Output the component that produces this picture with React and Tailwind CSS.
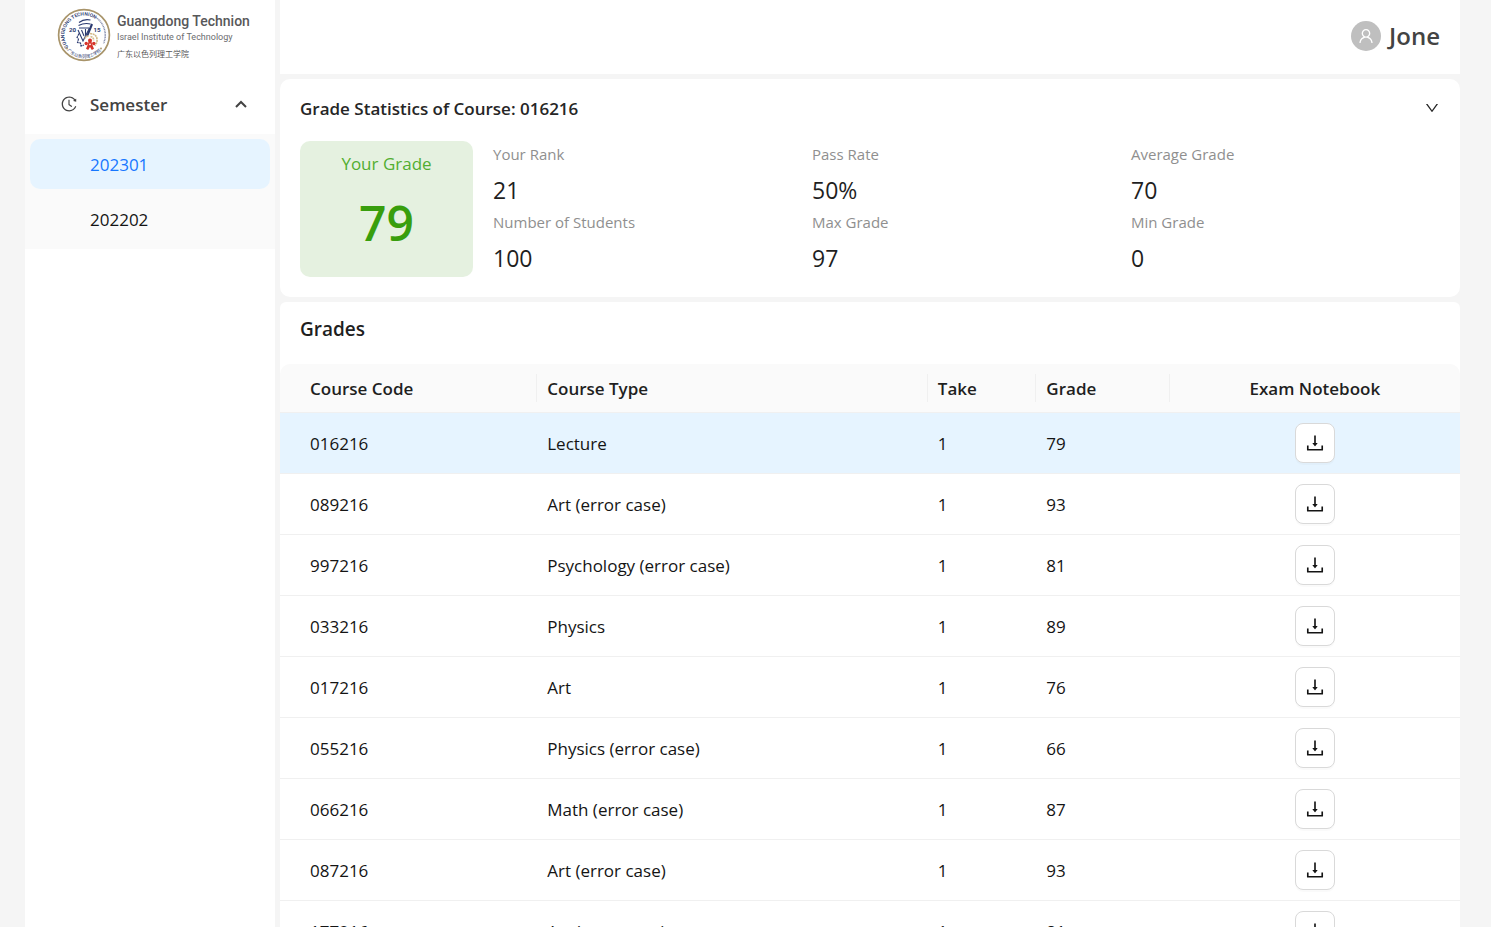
import React from "react";
import {
  AiOutlineDown,
  AiOutlineDownload,
  AiOutlineHistory,
  AiOutlineUser,
} from "react-icons/ai";

const semesters = ["202301", "202202"];

const statistics = [
  { label: "Your Rank", value: "21" },
  { label: "Pass Rate", value: "50%" },
  { label: "Average Grade", value: "70" },
  { label: "Number of Students", value: "100" },
  { label: "Max Grade", value: "97" },
  { label: "Min Grade", value: "0" },
];

const courses = [
  { code: "016216", type: "Lecture", take: 1, grade: 79 },
  { code: "089216", type: "Art (error case)", take: 1, grade: 93 },
  { code: "997216", type: "Psychology (error case)", take: 1, grade: 81 },
  { code: "033216", type: "Physics", take: 1, grade: 89 },
  { code: "017216", type: "Art", take: 1, grade: 76 },
  { code: "055216", type: "Physics (error case)", take: 1, grade: 66 },
  { code: "066216", type: "Math (error case)", take: 1, grade: 87 },
  { code: "087216", type: "Art (error case)", take: 1, grade: 93 },
  { code: "177216", type: "Art (error case)", take: 1, grade: 81 },
];

function Emblem() {
  return (
    <svg viewBox="0 0 54 54" className="size-[54px] shrink-0" aria-hidden="true">
      <circle cx="27" cy="27" r="25.4" fill="#fff" stroke="#a8946a" strokeWidth="1.7" />
      <defs>
        <path id="ring-top" d="M11.4 39 A19.6 19.6 0 1 1 46.6 27" />
        <path id="ring-bottom" d="M11 43.5 A23 23 0 0 0 43 43.5" />
      </defs>
      <g fontFamily="Roboto, 'Noto Sans CJK SC', sans-serif" fill="#2b3a70">
        <text fontSize="4.9" fontWeight="600">
          <textPath href="#ring-top">GUANGDONG TECHNION</textPath>
        </text>
        <text fontSize="4.2">
          <textPath href="#ring-bottom" startOffset="50%" textAnchor="middle">广东以色列理工学院</textPath>
        </text>
        <text x="12" y="24" fontSize="6.2" fontWeight="700">20</text>
        <text x="36.5" y="24" fontSize="6.2" fontWeight="700">15</text>
      </g>
      <path
        d="M39 9.5 A21.3 21.3 0 0 1 46.5 35.5"
        fill="none"
        stroke="#8089aa"
        strokeWidth="1.5"
        strokeDasharray="1 .6"
      />
      <g fill="none" stroke="#2b3a70" strokeWidth="1.1">
        <path d="M22 14.5 q5 -4 11.5 -2.5 M21.5 17.5 q6 -3 12 -1.5 M22 20 h10" />
        <path d="M21 22 l5 11 6.5 -13 M24.5 22 l2.5 6 M28.5 21 v6" />
        <path d="M22 25.5 l-2 4 1.5 1.5 -1 3.5 3 .5 .5 3 3 -1" strokeDasharray="2.5 .5" />
      </g>
      <path d="M34 15.5 l-5 13 2.5 -1 4.5 -11z" fill="#2b3a70" />
      <path
        d="M33 25.5 q6.5 .5 7 5.5 q.5 4 -2.5 6.5 M33.5 28.5 q3.5 1 3 4 M28 30.5 q1 -2.5 4 -2.5"
        fill="none"
        stroke="#d3b98a"
        strokeWidth="1.7"
        strokeDasharray="2 .6"
      />
      <g fill="#d6342a">
        <circle cx="33" cy="32.5" r="2" />
        <circle cx="29.2" cy="35.5" r="1.7" />
        <circle cx="36.8" cy="35.5" r="1.7" />
        <path d="M31.6 33.5 h2.8 l.8 3 1.8 4.2 -2.2 1.2 -1.8 -3 -1.8 3 -2.2 -1.2 1.800 -4.200z" />
      </g>
      <circle cx="33" cy="36.3" r="0.9" fill="#fff" />
      <circle cx="10" cy="40.5" r="0.9" fill="#a8946a" />
      <circle cx="44" cy="40.5" r="0.9" fill="#a8946a" />
    </svg>
  );
}

function Logo() {
  return (
    <a href="#home" className="flex h-[74px] items-start gap-1.5 pt-2 pl-8">
      <Emblem />
      <span className="flex flex-col pt-1 font-[Roboto,'Noto_Sans_CJK_SC',sans-serif] font-normal whitespace-nowrap">
        <span className="text-[14px] leading-[18px] font-medium text-[#58585a]">Guangdong Technion</span>
        <span className="text-[9px] leading-[14px] text-[#6b6c6f]">Israel Institute of Technology</span>
        <span className="pt-1 text-[8px] leading-[14px] text-[#58585a]">广东以色列理工学院</span>
      </span>
    </a>
  );
}

function Sidebar() {
  return (
    <nav aria-label="Semesters" className="w-[250px] shrink-0 bg-white">
      <Logo />
      <button
        type="button"
        aria-expanded="true"
        className="flex h-[60px] w-full items-center pr-7 pl-[35px] text-[17px] font-[550] text-[#434343]"
      >
        <AiOutlineHistory className="mr-3 size-[18px]" />
        <span className="flex-1 pt-0.5 text-left">Semester</span>
        <svg viewBox="0 0 12 8" className="h-2 w-3" fill="none" stroke="currentColor" strokeWidth="2" aria-hidden="true">
          <path d="M1 7 L6 2 L11 7" />
        </svg>
      </button>
      <ul className="flex flex-col gap-[5px] bg-[#fafafa] p-[5px]">
        {semesters.map((semester, index) => (
          <li key={semester}>
            <a
              href={`#${semester}`}
              className={
                index === 0
                  ? "flex h-[50px] items-center rounded-[10px] bg-[#e6f4ff] pt-0.5 pl-[60px] text-[#1677ff]"
                  : "flex h-[50px] items-center rounded-[10px] pt-0.5 pl-[60px]"
              }
            >
              {semester}
            </a>
          </li>
        ))}
      </ul>
    </nav>
  );
}

function Statistics() {
  return (
    <section className="shrink-0 rounded-[10px] bg-white px-5 pb-5">
      <button
        type="button"
        aria-expanded="true"
        className="flex h-[62px] w-full items-center justify-between pb-1 text-[17px] font-[550] text-[#262626]"
      >
        <span className="pt-0.5">Grade Statistics of Course: 016216</span>
        <AiOutlineDown className="size-4" />
      </button>
      <div className="flex gap-5">
        <div className="flex h-[136px] w-[173px] shrink-0 flex-col items-center rounded-[10px] bg-[#e5f1e0] pt-2.5">
          <span className="text-[17px] leading-[26px] text-[#52ae30]">Your Grade</span>
          <span className="pt-2.5 text-[48px] leading-[72px] font-semibold text-[#389e0d]">79</span>
        </div>
        <dl className="-mr-2.5 grid flex-1 grid-cols-3">
          {statistics.map((item) => (
            <div key={item.label} className="h-[68px]">
              <dt className="text-[15px] leading-[26px] text-[#8f8f8f]">{item.label}</dt>
              <dd className="pt-1 text-[23px] leading-[38px] text-[#1f1f1f]">{item.value}</dd>
            </div>
          ))}
        </dl>
      </div>
    </section>
  );
}

function HeaderCell({ children }) {
  return (
    <th scope="col" className="p-0 text-left font-[550]">
      <div className="flex h-7 items-center border-r border-[#f0f0f0] pt-0.5 pl-2.5">{children}</div>
    </th>
  );
}

function Grades() {
  return (
    <section className="shrink-0 rounded-t-[6px] bg-white">
      <h2 className="h-[62px] px-5 pt-3 text-[19px] leading-[30px] font-[550] text-[#1f1f1f]">Grades</h2>
      <table className="w-full table-fixed border-separate border-spacing-0">
        <colgroup>
          <col className="w-[21.8%]" />
          <col className="w-[33.1%]" />
          <col className="w-[9.2%]" />
          <col className="w-[11.3%]" />
          <col />
        </colgroup>
        <thead>
          <tr className="h-[49px] bg-[#fafafa] text-[#1f1f1f] [&>th]:border-b [&>th]:border-[#f0f0f0]">
            <th scope="col" className="rounded-tl-[10px] p-0 text-left font-[550]">
              <div className="flex h-7 items-center border-r border-[#f0f0f0] pt-0.5 pl-[30px]">Course Code</div>
            </th>
            <HeaderCell>Course Type</HeaderCell>
            <HeaderCell>Take</HeaderCell>
            <HeaderCell>Grade</HeaderCell>
            <th scope="col" className="rounded-tr-[10px] px-0 pt-0.5 pb-0 text-center font-[550]">
              Exam Notebook
            </th>
          </tr>
        </thead>
        <tbody>
          {courses.map((course, index) => (
            <tr
              key={course.code}
              className={
                index === 0
                  ? "h-[61px] bg-[#e6f4ff] [&>td]:border-b [&>td]:border-[#f0f0f0]"
                  : "h-[61px] [&>td]:border-b [&>td]:border-[#f0f0f0]"
              }
            >
              <td className="pt-0.5 pr-2.5 pb-0 pl-[30px]">{course.code}</td>
              <td className="px-2.5 pt-0.5 pb-0">{course.type}</td>
              <td className="px-2.5 pt-0.5 pb-0">{course.take}</td>
              <td className="px-2.5 pt-0.5 pb-0">{course.grade}</td>
              <td className="p-0">
                <button
                  type="button"
                  aria-label={`Download exam notebook ${course.code}`}
                  className="mx-auto flex size-10 items-center justify-center rounded-[8px] border border-[#d9d9d9] bg-white shadow-[0_2px_0_rgba(0,0,0,0.02)]"
                >
                  <AiOutlineDownload className="size-[22px]" />
                </button>
              </td>
            </tr>
          ))}
        </tbody>
      </table>
    </section>
  );
}

export default function App() {
  return (
    <div className="flex h-screen gap-[5px] overflow-hidden bg-[#f5f5f5] pr-[31px] pl-[25px] font-['Open_Sans','Noto_Sans_CJK_SC',sans-serif] text-[17px] font-[380] text-[#141414]">
      <Sidebar />
      <main className="flex min-w-0 flex-1 flex-col gap-[5px] overflow-y-auto [scrollbar-width:none]">
        <header className="flex h-[74px] shrink-0 items-center justify-end gap-2 bg-white pr-5 pb-0.5">
          <span className="flex size-[30px] items-center justify-center rounded-full bg-[#bfbfbf] text-white">
            <AiOutlineUser className="size-[18px]" />
          </span>
          <span className="text-[24px] leading-[30px] font-[550] text-[#434343]">Jone</span>
        </header>
        <Statistics />
        <Grades />
      </main>
    </div>
  );
}
